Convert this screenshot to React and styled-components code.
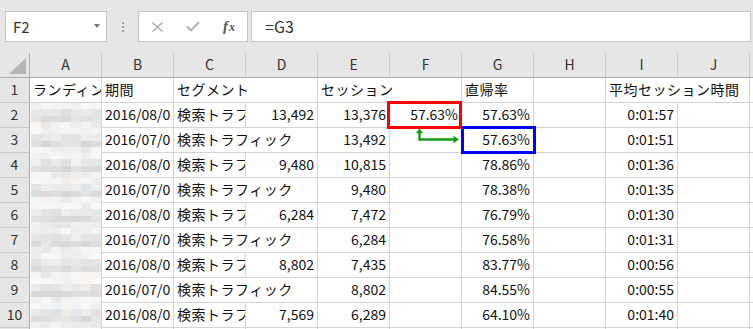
import React from "react";
import styled, { createGlobalStyle } from "styled-components";

const GlobalStyle = createGlobalStyle`
  html, body {
    margin: 0;
    padding: 0;
  }
  body {
    background: #e6e6e6;
    font-family: "Noto Sans CJK JP", "Noto Sans", sans-serif;
    overflow: hidden;
  }
`;

const COLUMNS = ["A", "B", "C", "D", "E", "F", "G", "H", "I", "J", ""];

const jp = text => ({ t: text, jp: true });
const num = text => ({ t: text, right: true });
const empty = { t: "" };

// rows 2..10: [date, D, E, F, G, I]
const DATA = [
  ["08", "13,492", "13,376", "57.63%", "57.63%", "0:01:57"],
  ["07", "", "13,492", "", "57.63%", "0:01:51"],
  ["08", "9,480", "10,815", "", "78.86%", "0:01:36"],
  ["07", "", "9,480", "", "78.38%", "0:01:35"],
  ["08", "6,284", "7,472", "", "76.79%", "0:01:30"],
  ["07", "", "6,284", "", "76.58%", "0:01:31"],
  ["08", "8,802", "7,435", "", "83.77%", "0:00:56"],
  ["07", "", "8,802", "", "84.55%", "0:00:55"],
  ["08", "7,569", "6,289", "", "64.10%", "0:01:40"],
];

const buildRows = () => {
  const rows = [
    {
      n: 1,
      cells: [
        jp("ランディングページ"),
        jp("期間"),
        { ...jp("セグメント"), span: 2 },
        { ...jp("セッション"), span: 2 },
        jp("直帰率"),
        empty,
        { ...jp("平均セッション時間"), span: 2 },
        empty,
      ],
    },
  ];

  DATA.forEach(([month, d, e, f, g, i], idx) => {
    const n = idx + 2;
    const cells = [];
    if (n === 2) cells.push({ mosaic: true });
    cells.push({ t: `2016/${month}/0` });
    if (d) {
      cells.push(jp("検索トラフィック"));
      cells.push(num(d));
    } else {
      cells.push({ ...jp("検索トラフィック"), span: 2 });
    }
    cells.push(num(e));
    cells.push({ ...num(f), mark: n === 2 ? "red" : n === 3 ? "arrow" : null });
    cells.push({ ...num(g), mark: n === 3 ? "blue" : null });
    cells.push(empty);
    cells.push(num(i));
    cells.push(empty);
    cells.push(empty);
    rows.push({ n, cells });
  });

  rows.push({ n: 11, cells: Array.from({ length: 11 }, () => empty) });
  return rows;
};

const ROWS = buildRows();

const noise = i => {
  const x = Math.sin(i * 12.9898 + 78.233) * 43758.5453;
  return x - Math.floor(x);
};

const Mosaic = () => {
  const profile = [243, 231, 222, 239];
  const blocks = [];
  for (let r = 0; r < 36; r++) {
    for (let c = 0; c < 7; c++) {
      const k = r * 7 + c;
      const base = profile[r % 4] + (noise(k) - 0.5) * 16;
      const v = Math.max(204, Math.min(248, Math.round(base)));
      const tint = Math.round((noise(k + 500) - 0.5) * 6);
      blocks.push(
        <rect
          key={k}
          x={1 + c * 10}
          y={r * 6.25}
          width={10}
          height={6.25}
          fill={`rgb(${v + tint},${v},${v - tint})`}
        />
      );
    }
  }
  return (
    <svg width="71" height="225" shapeRendering="crispEdges">
      {blocks}
    </svg>
  );
};

const App = () => (
  <>
    <GlobalStyle />
    <Page>
      <FormulaBar>
        <NameBox>
          <span>F2</span>
          <Caret />
        </NameBox>
        <Grip>
          <Dot />
          <Dot />
          <Dot />
        </Grip>
        <FnBox>
          <FnSlot>
            <svg width="11" height="10" viewBox="0 0 11 10">
              <path d="M0.5 0.5 L10.5 9.5 M10.5 0.5 L0.5 9.5" stroke="#a8a8a8" strokeWidth="1.3" fill="none" />
            </svg>
          </FnSlot>
          <FnSlot>
            <svg width="14" height="11" viewBox="0 0 14 11">
              <path d="M1 5.5 L5 9.5 L13 1" stroke="#b0b0b0" strokeWidth="1.9" fill="none" />
            </svg>
          </FnSlot>
          <FnSlot>
            <FxLabel>
              f<sub>x</sub>
            </FxLabel>
          </FnSlot>
        </FnBox>
        <FormulaInput>=G3</FormulaInput>
      </FormulaBar>

      <Sheet>
        <Corner>
          <svg width="17" height="16" viewBox="0 0 17 16">
            <polygon points="17,0 17,16 0,16" fill="#b4b4b4" />
          </svg>
        </Corner>
        {COLUMNS.map((c, i) => (
          <ColHead key={i}>{c}</ColHead>
        ))}

        {ROWS.map(row => (
          <React.Fragment key={row.n}>
            <RowHead>{row.n}</RowHead>
            {row.cells.map((cell, i) =>
              cell.mosaic ? (
                <MosaicCell key={i}>
                  <Mosaic />
                </MosaicCell>
              ) : (
                <Cell
                  key={i}
                  $span={cell.span}
                  $right={cell.right}
                  $jp={cell.jp}
                  $mark={!!cell.mark}
                >
                  {cell.t}
                  {cell.mark === "red" && <Outline $color="#ff0000" $left={-3} />}
                  {cell.mark === "blue" && <Outline $color="#0000ff" $left={-1} />}
                  {cell.mark === "arrow" && (
                    <Arrow width="48" height="16" viewBox="0 0 48 16">
                      <path d="M5.5 4 L5.5 11.5 L40 11.5" stroke="#129a12" strokeWidth="2.4" fill="none" />
                      <polygon points="5.5,0.5 1.8,5.2 9.2,5.2" fill="#129a12" />
                      <polygon points="45,11.5 39.5,7.8 39.5,15.2" fill="#129a12" />
                    </Arrow>
                  )}
                </Cell>
              )
            )}
          </React.Fragment>
        ))}
      </Sheet>
    </Page>
  </>
);

export default App;

const Page = styled.div`
  width: 753px;
  height: 329px;
  overflow: hidden;
  background: #e6e6e6;
`;

const FormulaBar = styled.div`
  display: flex;
  align-items: stretch;
  height: 31px;
  padding: 11px 0 11px 5px;
`;

const Box = styled.div`
  box-sizing: border-box;
  background: #fff;
  border: 1px solid #c6c6c6;
  display: flex;
  align-items: center;
`;

const NameBox = styled(Box)`
  width: 102px;
  justify-content: space-between;
  padding: 0 6px 1px 7px;
  font-size: 15px;
  color: #333;
`;

const Caret = styled.span`
  width: 0;
  height: 0;
  border-left: 3.5px solid transparent;
  border-right: 3.5px solid transparent;
  border-top: 4px solid #777;
`;

const Grip = styled.div`
  display: flex;
  flex-direction: column;
  justify-content: center;
  gap: 2px;
  margin-left: 15px;
`;

const Dot = styled.span`
  width: 2px;
  height: 2px;
  background: #a0a0a0;
`;

const FnBox = styled(Box)`
  width: 110px;
  margin-left: 14px;
`;

const FnSlot = styled.div`
  width: 36px;
  display: flex;
  align-items: center;
  justify-content: center;
`;

const FxLabel = styled.span`
  font-family: "Liberation Serif", serif;
  font-style: italic;
  font-weight: bold;
  font-size: 15px;
  color: #555;
  line-height: 1;

  sub {
    font-size: 12px;
    vertical-align: baseline;
    margin-left: 1px;
  }
`;

const FormulaInput = styled(Box)`
  width: 500px;
  margin-left: 3px;
  padding: 0 0 1px 13px;
  font-size: 16px;
  color: #333;
`;

const Sheet = styled.div`
  display: grid;
  grid-template-columns: 30px repeat(11, 72px);
  grid-auto-rows: 25px;
  width: 822px;
`;

const HeadBase = styled.div`
  box-sizing: border-box;
  background: #e6e6e6;
  display: flex;
  align-items: center;
  justify-content: center;
  font-size: 14px;
  color: #333;
  line-height: 1;
  padding-bottom: 3px;
`;

const Corner = styled(HeadBase)`
  border-right: 1px solid #ababab;
  border-bottom: 1px solid #ababab;
  justify-content: flex-end;
  align-items: flex-end;
  padding: 0 3px 3px 0;
`;

const ColHead = styled(HeadBase)`
  border-right: 1px solid #cbcbcb;
  border-bottom: 1px solid #ababab;
`;

const RowHead = styled(HeadBase)`
  border-right: 1px solid #ababab;
  border-bottom: 1px solid #cbcbcb;
  padding-bottom: 2px;
`;

const Cell = styled.div`
  position: ${p => (p.$mark ? "relative" : "static")};
  grid-column: span ${p => p.$span || 1};
  box-sizing: border-box;
  min-width: 0;
  padding: 0 3px 2px;
  border-right: 1px solid #d4d4d4;
  border-bottom: 1px solid #d4d4d4;
  background: #fff;
  display: flex;
  align-items: center;
  justify-content: ${p => (p.$right ? "flex-end" : "flex-start")};
  white-space: nowrap;
  overflow: ${p => (p.$mark ? "visible" : "hidden")};
  font-size: 14px;
  line-height: 1;
  letter-spacing: ${p => (p.$jp ? "0.5px" : "0")};
  color: #111;
`;

const MosaicCell = styled.div`
  grid-row: span 9;
  box-sizing: border-box;
  border-right: 1px solid #d4d4d4;
  background: #fff;
  overflow: hidden;

  svg {
    display: block;
  }
`;

const Outline = styled.div`
  position: absolute;
  z-index: 2;
  top: -2px;
  left: ${p => p.$left}px;
  width: 75px;
  height: 28px;
  box-sizing: border-box;
  border: 3px solid ${p => p.$color};
  pointer-events: none;
`;

const Arrow = styled.svg`
  position: absolute;
  z-index: 2;
  top: 0;
  left: 24px;
`;
